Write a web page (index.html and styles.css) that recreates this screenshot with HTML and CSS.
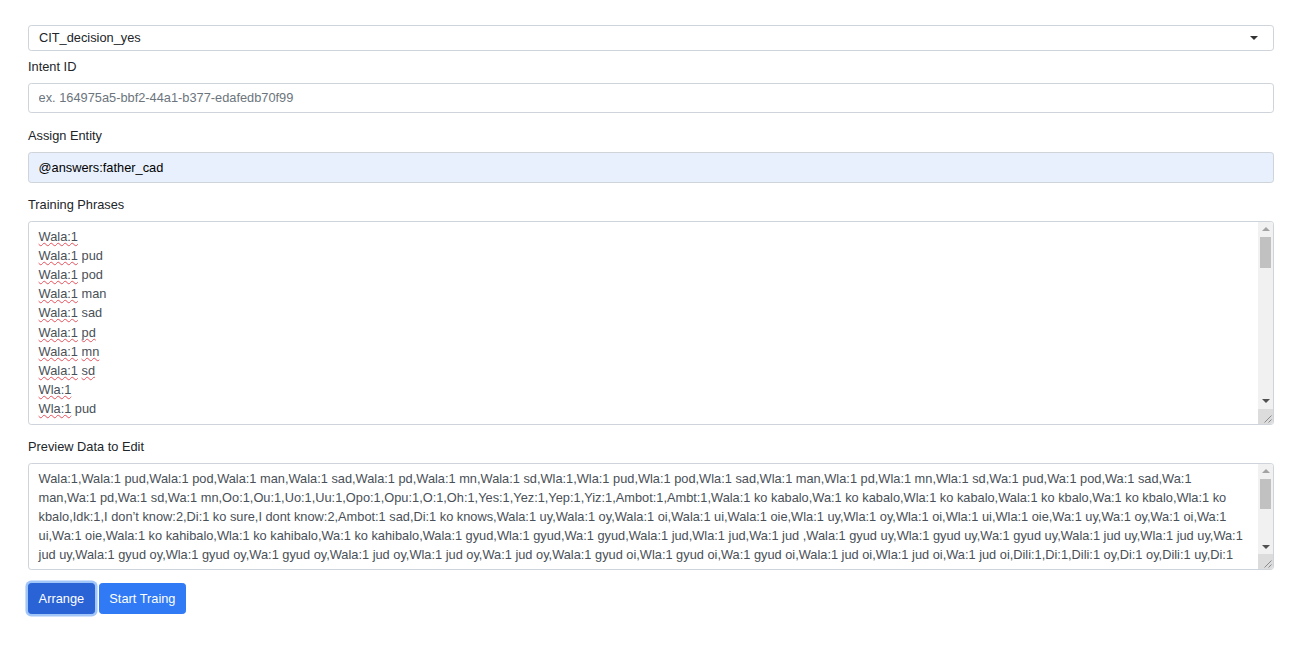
FILE: index.html
```html
<!DOCTYPE html>
<html lang="en">
<head>
<meta charset="utf-8">
<title>Intent Training</title>
<link rel="stylesheet" href="styles.css">
</head>
<body>
<form class="page">
  <div class="select-wrap">
    <select class="field field-select">
      <option>CIT_decision_yes</option>
    </select>
  </div>
  <div class="group group-first">
    <label class="label">Intent ID</label>
    <input class="field field-input" type="text" placeholder="ex. 164975a5-bbf2-44a1-b377-edafedb70f99">
  </div>
  <div class="group">
    <label class="label">Assign Entity</label>
    <input class="field field-input field-autofill" type="text" value="@answers:father_cad">
  </div>
  <div class="group">
    <label class="label">Training Phrases</label>
    <div class="scroll-box">
      <div class="field field-area field-phrases" role="textbox" aria-multiline="true" contenteditable="true" spellcheck="true">
        <div><span class="sp">Wala:1</span></div>
        <div><span class="sp">Wala:1</span> pud</div>
        <div><span class="sp">Wala:1</span> pod</div>
        <div><span class="sp">Wala:1</span> man</div>
        <div><span class="sp">Wala:1</span> sad</div>
        <div><span class="sp">Wala:1</span> <span class="sp">pd</span></div>
        <div><span class="sp">Wala:1</span> <span class="sp">mn</span></div>
        <div><span class="sp">Wala:1</span> <span class="sp">sd</span></div>
        <div><span class="sp">Wla:1</span></div>
        <div><span class="sp">Wla:1</span> pud</div>
      </div>
      <div class="sb sb-tall" aria-hidden="true">
        <div class="sb-btn"><span class="tri tri-up"></span></div>
        <div class="sb-track"><div class="sb-thumb sb-thumb-tall"></div></div>
        <div class="sb-btn"><span class="tri tri-down"></span></div>
        <div class="sb-corner">
          <svg width="15" height="15" viewBox="0 0 15 15"><path d="M13.5 6.5 L6.5 13.5 M13.5 10.5 L10.5 13.5" stroke="#8a8a8a" stroke-width="1" fill="none"/></svg>
        </div>
      </div>
    </div>
  </div>
  <div class="group">
    <label class="label">Preview Data to Edit</label>
    <div class="scroll-box">
      <textarea class="field field-area field-preview" rows="5" spellcheck="false">Wala:1,Wala:1 pud,Wala:1 pod,Wala:1 man,Wala:1 sad,Wala:1 pd,Wala:1 mn,Wala:1 sd,Wla:1,Wla:1 pud,Wla:1 pod,Wla:1 sad,Wla:1 man,Wla:1 pd,Wla:1 mn,Wla:1 sd,Wa:1 pud,Wa:1 pod,Wa:1 sad,Wa:1 man,Wa:1 pd,Wa:1 sd,Wa:1 mn,Oo:1,Ou:1,Uo:1,Uu:1,Opo:1,Opu:1,O:1,Oh:1,Yes:1,Yez:1,Yep:1,Yiz:1,Ambot:1,Ambt:1,Wala:1 ko kabalo,Wa:1 ko kabalo,Wla:1 ko kabalo,Wala:1 ko kbalo,Wa:1 ko kbalo,Wla:1 ko kbalo,Idk:1,I don’t know:2,Di:1 ko sure,I dont know:2,Ambot:1 sad,Di:1 ko knows,Wala:1 uy,Wala:1 oy,Wala:1 oi,Wala:1 ui,Wala:1 oie,Wla:1 uy,Wla:1 oy,Wla:1 oi,Wla:1 ui,Wla:1 oie,Wa:1 uy,Wa:1 oy,Wa:1 oi,Wa:1 ui,Wa:1 oie,Wala:1 ko kahibalo,Wla:1 ko kahibalo,Wa:1 ko kahibalo,Wala:1 gyud,Wla:1 gyud,Wa:1 gyud,Wala:1 jud,Wla:1 jud,Wa:1 jud ,Wala:1 gyud uy,Wla:1 gyud uy,Wa:1 gyud uy,Wala:1 jud uy,Wla:1 jud uy,Wa:1 jud uy,Wala:1 gyud oy,Wla:1 gyud oy,Wa:1 gyud oy,Wala:1 jud oy,Wla:1 jud oy,Wa:1 jud oy,Wala:1 gyud oi,Wla:1 gyud oi,Wa:1 gyud oi,Wala:1 jud oi,Wla:1 jud oi,Wa:1 jud oi,Dili:1,Di:1,Dili:1 oy,Di:1 oy,Dili:1 uy,Di:1 uy,Dili:1 oi,Di:1 oi,Dili:1 sad,Di:1 sad,Dili:1 pud,Di:1 pud,Dili:1 pod,Di:1 pod,Dili:1 man,Di:1 man,Dili:1 jud,Di:1 jud,Dili:1 gyud,Di:1 gyud,Dili:1 jud uy,Di:1 jud uy,Dili:1 gyud uy,Di:1 gyud uy,Dili:1 jud oy,Di:1 jud oy,Dili:1 gyud oy,Di:1 gyud oy,Dili:1 jud oi,Di:1 jud oi,Dili:1 gyud oi,Di:1 gyud oi,Dli:1,Dli:1 oy,Dli:1 uy,Dli:1 oi,Dli:1 sad,Dli:1 pud,Dli:1 pod,Dli:1 man,Dli:1 jud,Dli:1 gyud</textarea>
      <div class="sb sb-short" aria-hidden="true">
        <div class="sb-btn"><span class="tri tri-up"></span></div>
        <div class="sb-track"><div class="sb-thumb sb-thumb-short"></div></div>
        <div class="sb-btn"><span class="tri tri-down"></span></div>
        <div class="sb-corner">
          <svg width="15" height="15" viewBox="0 0 15 15"><path d="M13.5 6.5 L6.5 13.5 M13.5 10.5 L10.5 13.5" stroke="#8a8a8a" stroke-width="1" fill="none"/></svg>
        </div>
      </div>
    </div>
  </div>
  <div class="actions">
    <button type="button" class="btn btn-focus">Arrange</button>
    <button type="button" class="btn">Start Traing</button>
  </div>
</form>
</body>
</html>
```

FILE: styles.css
```css
html {
  font-size: 12.8px;
}
body {
  margin: 0;
  background: #ffffff;
  font-family: "Liberation Sans", Arial, sans-serif;
  font-size: 1rem;
  line-height: 1.5;
  color: #212529;
}
.page {
  display: flex;
  flex-direction: column;
  padding: 25px 16px 40px 28px;
}
.group {
  display: flex;
  flex-direction: column;
  margin-top: 1rem;
}
.group-first {
  margin-top: 6px;
}
.label {
  display: block;
  margin-bottom: 0.5rem;
  color: #212529;
  font-size: 1rem;
  line-height: 1.5;
}
.field {
  box-sizing: border-box;
  width: 100%;
  font-family: "Liberation Sans", Arial, sans-serif;
  font-size: 1rem;
  line-height: 1.5;
  color: #495057;
  background: #ffffff;
  border: 1px solid #ced4da;
  border-radius: 0.25rem;
  margin: 0;
  outline: none;
}

/* select */
.select-wrap {
  position: relative;
  display: flex;
}
.select-wrap::after {
  content: "";
  position: absolute;
  right: 16px;
  top: 11px;
  width: 0;
  height: 0;
  border-left: 4px solid transparent;
  border-right: 4px solid transparent;
  border-top: 4px solid #333333;
  pointer-events: none;
}
.field-select {
  appearance: none;
  -webkit-appearance: none;
  height: 26px;
  padding: 0 30px 0 10px;
  color: #212529;
}

/* inputs */
.field-input {
  height: calc(1.5em + 0.75rem + 2px);
  padding: 0.375rem 0.75rem;
}
.field-input::placeholder {
  color: #6c757d;
  opacity: 1;
}
.field-autofill {
  background: #e8f0fe;
  color: #000000;
}

/* text areas with drawn scrollbar */
.scroll-box {
  position: relative;
  display: flex;
}
.field-area {
  padding: 0.375rem calc(0.75rem + 15px) 0.375rem 0.75rem;
  resize: none;
  overflow: hidden;
  scrollbar-width: none;
}
.field-phrases {
  height: calc(15em + 0.75rem + 2px);
}
.sp {
  text-decoration: underline wavy #e8505a;
  text-decoration-thickness: 1px;
  text-underline-offset: 1px;
  text-decoration-skip-ink: none;
}

.sb {
  position: absolute;
  top: 1px;
  right: 1px;
  bottom: 1px;
  width: 15px;
  display: flex;
  flex-direction: column;
  background: #f1f1f1;
  border-radius: 0 3px 3px 0;
  overflow: hidden;
}
.sb-btn {
  height: 15px;
  flex: 0 0 15px;
  display: flex;
  align-items: center;
  justify-content: center;
}
.tri {
  width: 0;
  height: 0;
  border-left: 4px solid transparent;
  border-right: 4px solid transparent;
}
.tri-up {
  border-bottom: 4px solid #a3a3a3;
}
.tri-down {
  border-top: 4px solid #505050;
}
.sb-track {
  flex: 1;
  display: flex;
  flex-direction: column;
  padding: 0 2px;
}
.sb-thumb {
  background: #c1c1c1;
}
.sb-thumb-tall {
  height: 31px;
}
.sb-thumb-short {
  height: 30px;
}
.sb-corner {
  height: 15px;
  flex: 0 0 15px;
  background: #dcdcdc;
}
.sb-corner svg {
  display: block;
}

/* buttons */
.actions {
  display: flex;
  gap: 4px;
  margin-top: 1rem;
}
.btn {
  font-family: "Liberation Sans", Arial, sans-serif;
  font-size: 1rem;
  line-height: 1.5;
  color: #ffffff;
  background: #307af6;
  border: 1px solid #307af6;
  border-radius: 0.25rem;
  padding: 0.375rem 0.75rem;
  cursor: pointer;
}
.btn-focus {
  background: #2a63d6;
  border-color: #2a63d6;
  box-shadow: 0 0 0 0.2rem rgba(102, 160, 245, 0.6);
}
```
